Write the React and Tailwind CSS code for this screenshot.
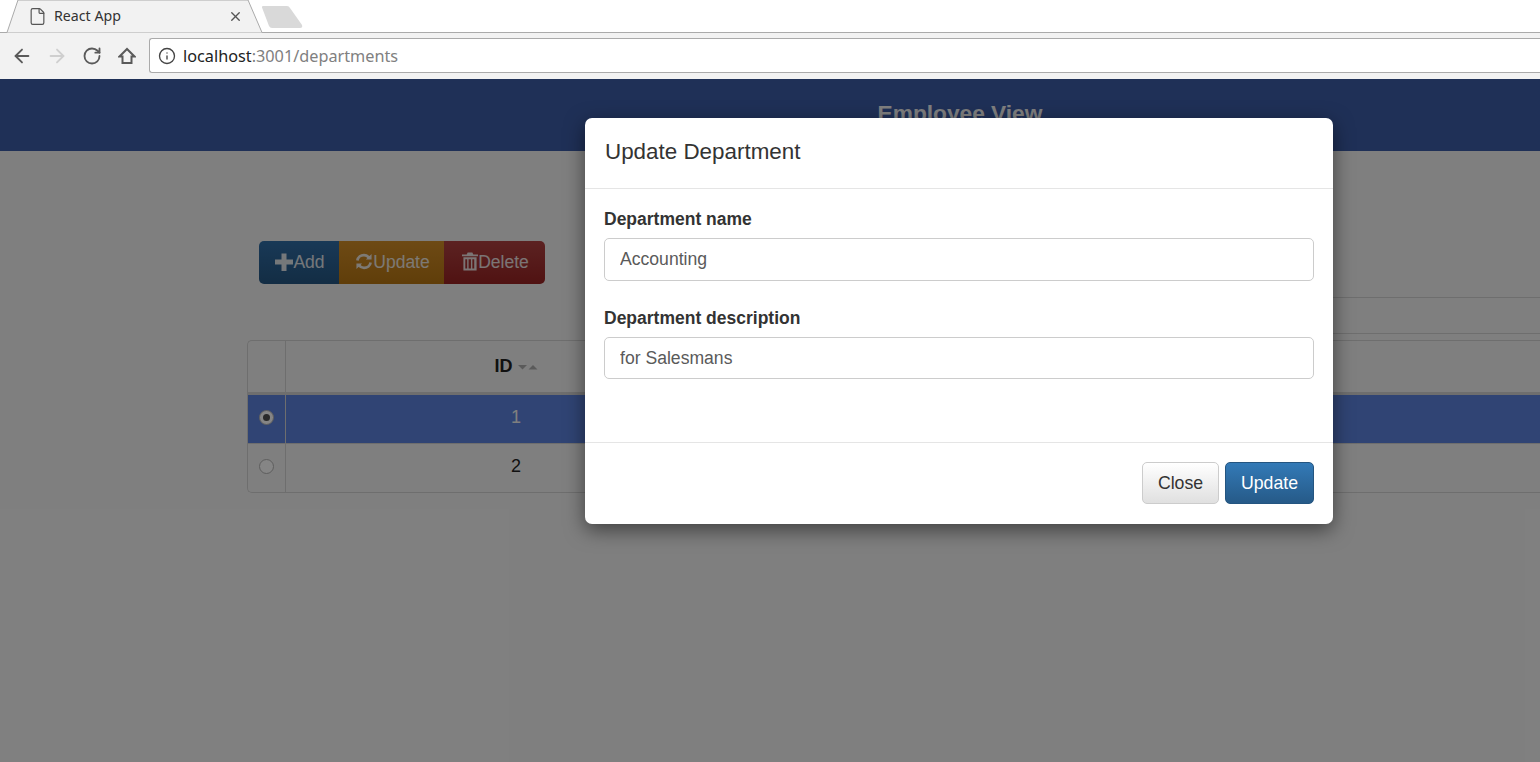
import React from "react";
import { ArrowLeft, ArrowRight, RotateCw, File, X, Info } from "lucide-react";

function HomeIcon() {
  return (
    <svg width="18" height="18" viewBox="0 0 18 18" fill="none" stroke="#5a5a5a" strokeWidth="2" strokeLinejoin="miter">
      <path d="M1.5 9.5 9 2l7.5 7.5h-3V16h-9V9.5z" />
    </svg>
  );
}

function PlusIcon() {
  return (
    <svg width="18" height="18" viewBox="0 0 18 18" fill="currentColor" className="-mt-[2px]">
      <path d="M6.5 0.500h5v6H18v5h-6.500V18h-5v-6.500H0v-5h6.500z" />
    </svg>
  );
}

function RefreshIcon() {
  return (
    <svg width="18" height="19" viewBox="0 0 19 19" fill="none" stroke="currentColor" strokeWidth="2.8" className="-mt-[2px]">
      <path d="M2.5 8.5C3 5 6 2.8 9.5 2.8c2.4 0 4 1 5.2 2.6" />
      <path d="M16.5 10.5c-.5 3.5-3.500 5.700-7 5.700-2.400 0-4-1-5.200-2.600" />
      <path d="M17.500 1.500v6h-6z" fill="currentColor" stroke="none" />
      <path d="M1.500 17.500v-6h6z" fill="currentColor" stroke="none" />
    </svg>
  );
}

function TrashIcon() {
  return (
    <svg width="16" height="19" viewBox="0 0 17 19" fill="currentColor" className="-mt-[3px]">
      <path d="M6 0h5l1 2h5v2H0V2h5z" />
      <path d="M1.500 5h14v14h-14zM3.500 7v10h2V7zm3.500 0v10h2.500V7zm4 0v10h2V7z" fillRule="evenodd" />
    </svg>
  );
}

function SortCarets() {
  return (
    <svg width="20" height="6" viewBox="0 0 20 6" className="ml-[5px]" fill="#b5b5b5">
      <path d="M0 1h9L4.500 5.500z" />
      <path d="M10.500 5.500h9L15 1z" />
    </svg>
  );
}

// z-10 keeps the radio over the backdrop, its colours are already the dimmed ones
function Radio({ checked }) {
  return (
    <span className="relative z-10 mr-[1px] flex h-[15px] w-[15px] items-center justify-center rounded-full border border-[#5e5e5e] bg-[#858585]">
      {checked && <span className="h-[7px] w-[7px] rounded-full bg-[#2a2a2a]" />}
    </span>
  );
}

function BrowserBar() {
  return (
    <>
      <div className="relative flex h-[33px] items-start border-b border-[#aaaaaa] bg-white">
        <div className="relative z-10 flex h-[32px] w-[264px] items-center text-[#333]">
          <svg className="absolute inset-0" width="264" height="33" viewBox="0 0 264 33">
            <path d="M0 32.500h7L18 0h230l14 32.500h2" fill="#f2f2f2" stroke="#aaaaaa" />
          </svg>
          <File size={19} strokeWidth={1.5} color="#555" className="relative ml-[28px]" />
          <span className="relative ml-[7px] font-['Noto_Sans',sans-serif] text-[14.200px]">React App</span>
          <X size={15} strokeWidth={2.2} color="#555" className="relative ml-auto mr-[21px]" />
        </div>
        <svg width="46" height="22" viewBox="0 0 46 22" className="mt-[6px] -ml-[4px]">
          <path d="M2 1.500Q1.500 0 3 0h24q2 0 3 2l12 17q1 3-2 3H12q-2 0-3-2z" fill="#d9d9d9" />
        </svg>
      </div>
      <div className="flex h-[46px] items-center bg-[#f2f2f2]">
        <ArrowLeft size={22} strokeWidth={2} color="#5a5a5a" className="ml-[11px]" />
        <ArrowRight size={22} strokeWidth={2} color="#cfcfcf" className="ml-[13px]" />
        <RotateCw size={20} strokeWidth={2.2} color="#5a5a5a" className="ml-[14px]" />
        <div className="ml-[16px]"><HomeIcon /></div>
        <div className="mb-[1px] ml-[13px] flex h-[35px] flex-1 items-center rounded-l-[3px] border-y border-l border-[#aaaaaa] bg-white">
          <Info size={18} strokeWidth={1.8} color="#444" className="ml-[8px]" />
          <span className="ml-[7px] pt-[2px] font-['Noto_Sans',sans-serif] text-[16.250px] text-[#808080]">
            <span className="text-[#222]">localhost</span>:3001/departments
          </span>
        </div>
      </div>
    </>
  );
}

function Toolbar() {
  const btn = "flex h-[43px] items-center justify-center pl-[2px] text-[17.500px] text-white/90";
  return (
    <div className="ml-[12px] flex">
      <div className={`${btn} w-[80px] rounded-l-[5px] bg-linear-to-b from-[#3272ae] to-[#265a88]`}>
        <PlusIcon />Add
      </div>
      <div className={`${btn} w-[105px] bg-linear-to-b from-[#dc9428] to-[#c07c14]`}>
        <RefreshIcon />Update
      </div>
      <div className={`${btn} w-[101px] rounded-r-[5px] bg-linear-to-b from-[#b84444] to-[#a02424]`}>
        <TrashIcon />Delete
      </div>
    </div>
  );
}

function DeptTable() {
  const rows = [
    { id: 1, selected: true },
    { id: 2, selected: false },
  ];
  return (
    <div className="mt-[6px] rounded-l-[5px] border-y border-l border-[#dddddd] text-[18px] text-[#222]">
      <div className="flex h-[54px] border-b-[3px] border-[#dddddd]">
        <div className="w-[38px] border-r border-[#dddddd]" />
        <div className="flex w-[460px] items-center justify-center font-bold">
          ID<SortCarets />
        </div>
      </div>
      {rows.map((row, i) => (
        <div
          key={row.id}
          className={`flex ${i > 0 ? "h-[48px]" : "h-[49px] border-b border-[#dddddd]"} ${row.selected ? "bg-[#6088e8] text-white" : ""}`}
        >
          <div className="flex w-[38px] items-center justify-center border-r border-[#dddddd] pb-[3px]">
            <Radio checked={row.selected} />
          </div>
          <div className="flex w-[460px] items-center justify-center pb-[3px]">{row.id}</div>
        </div>
      ))}
    </div>
  );
}

function UpdateModal() {
  const input = "block w-full rounded-[5px] border border-[#cccccc] px-[15px] text-[17.600px] text-[#5a5a5a] outline-none";
  return (
    <div className="absolute left-[585px] top-[118px] z-20 flex h-[406px] w-[748px] flex-col rounded-[7px] bg-white text-[#333] shadow-[0_6px_20px_rgba(0,0,0,0.5)]">
      <div className="flex h-[71px] items-center border-b border-[#e5e5e5] px-[20px] pb-[2px] text-[22.400px]">Update Department</div>
      <div className="flex-1 px-[19px] pt-[20px]">
        <label className="mb-[9px] block text-[17.500px] font-bold leading-[20px]">Department name</label>
        <input readOnly value="Accounting" className={`${input} h-[43px]`} />
        <label className="mb-[9px] mt-[27px] block text-[17.500px] font-bold leading-[20px]">Department description</label>
        <input readOnly value="for Salesmans" className={`${input} h-[42px]`} />
      </div>
      <div className="flex justify-end gap-[6px] border-t border-[#e5e5e5] px-[19px] pb-[20px] pt-[19px] text-[17.700px]">
        <button className="h-[42px] w-[77px] rounded-[5px] border border-[#cccccc] bg-linear-to-b from-white to-[#e0e0e0]">Close</button>
        <button className="h-[42px] w-[89px] rounded-[5px] border border-[#245580] bg-linear-to-b from-[#337ab7] to-[#265a88] text-white">Update</button>
      </div>
    </div>
  );
}

export default function App() {
  return (
    <div className="relative h-[762px] w-[1540px] overflow-hidden bg-white font-['Liberation_Sans',Arial,sans-serif]">
      <BrowserBar />
      <div className="overflow-hidden">
        <div className="flex h-[72px] justify-center bg-[#3e60ae] pl-[380px] pt-[20px] text-[22.700px] font-bold leading-[28px] text-white">
          Employee View
        </div>
        <div className="ml-[247px] pt-[90px]">
          <Toolbar />
          <div className="ml-auto mt-[13px] h-[37px] w-[500px] border-y border-[#dddddd]" />
          <DeptTable />
        </div>
      </div>
      <div className="absolute inset-x-0 bottom-0 top-[79px] bg-black/50" />
      <UpdateModal />
    </div>
  );
}
